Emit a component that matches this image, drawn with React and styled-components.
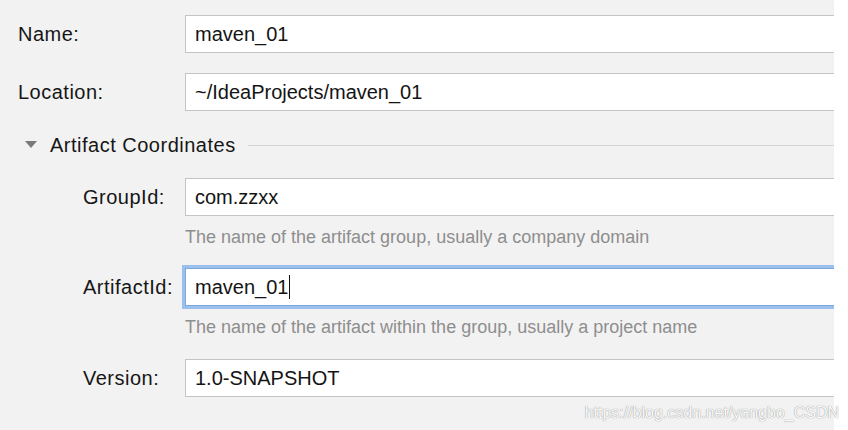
import React from "react";
import styled, { createGlobalStyle } from "styled-components";

const GlobalStyle = createGlobalStyle`
  html, body {
    margin: 0;
    padding: 0;
    background: #ffffff;
  }
  body {
    font-family: "Liberation Sans", Arial, Helvetica, sans-serif;
  }
`;

const Page = styled.div`
  position: relative;
  width: 848px;
  height: 430px;
  overflow: hidden;
`;

const Panel = styled.div`
  width: 834px;
  height: 430px;
  background: #f2f2f2;
  overflow: hidden;
  box-sizing: border-box;
  padding: 15px 0 0 18px;
  display: flex;
  flex-direction: column;
`;

const Row = styled.div`
  display: flex;
  align-items: center;
  height: 38px;
  margin-bottom: ${(p) => p.$gap || 0}px;
`;

const Label = styled.div`
  width: ${(p) => p.$width}px;
  flex: none;
  font-size: 20px;
  letter-spacing: 0.5px;
  color: #161616;
`;

const Field = styled.div`
  flex: 1;
  height: 38px;
  margin-right: -12px;
  box-sizing: border-box;
  background: #ffffff;
  border: 1px solid ${(p) => (p.$focused ? "#7fa8de" : "#c4c4c4")};
  box-shadow: ${(p) => (p.$focused ? "0 0 0 3px #9cc0ee" : "none")};
  display: flex;
  align-items: center;
  padding-left: 9px;
  font-size: 20px;
  color: #141414;
  white-space: nowrap;
`;

const Caret = styled.span`
  display: inline-block;
  width: 1px;
  height: 24px;
  background: #111;
  margin-left: 1px;
`;

const Section = styled.div`
  display: flex;
  align-items: center;
  height: 24px;
  margin: 22px 0 21px 7px;
`;

const Triangle = styled.svg`
  width: 12px;
  height: 8px;
  flex: none;
  margin-right: 13px;
`;

const SectionTitle = styled.div`
  font-size: 20px;
  letter-spacing: 0.5px;
  color: #161616;
  white-space: nowrap;
`;

const Rule = styled.div`
  flex: 1;
  height: 1px;
  background: #d6d6d6;
  margin-left: 12px;
`;

const SubForm = styled.div`
  padding-left: 65px;
  display: flex;
  flex-direction: column;
`;

const Hint = styled.div`
  height: 22px;
  line-height: 22px;
  margin: 10px 0 ${(p) => p.$after}px 102px;
  font-size: 18px;
  color: #8e8e8e;
  white-space: nowrap;
`;

const Watermark = styled.div`
  position: absolute;
  right: 9px;
  bottom: 8px;
  font-size: 16px;
  color: rgba(255, 255, 255, 0.95);
  text-shadow: 0 0 1px #9a9a9a, 0 0 1px #b0b0b0;
  white-space: nowrap;
`;

export default function App() {
  return (
    <Page>
      <GlobalStyle />
      <Panel>
        <Row $gap={20}>
          <Label $width={167}>Name:</Label>
          <Field>maven_01</Field>
        </Row>
        <Row>
          <Label $width={167}>Location:</Label>
          <Field>~/IdeaProjects/maven_01</Field>
        </Row>
        <Section>
          <Triangle viewBox="0 0 12 8">
            <path d="M0 0 L12 0 L6 7 Z" fill="#7a7a7a" />
          </Triangle>
          <SectionTitle>Artifact Coordinates</SectionTitle>
          <Rule />
        </Section>
        <SubForm>
          <Row>
            <Label $width={102}>GroupId:</Label>
            <Field>com.zzxx</Field>
          </Row>
          <Hint $after={20}>The name of the artifact group, usually a company domain</Hint>
          <Row>
            <Label $width={102}>ArtifactId:</Label>
            <Field $focused>
              maven_01
              <Caret />
            </Field>
          </Row>
          <Hint $after={21}>The name of the artifact within the group, usually a project name</Hint>
          <Row>
            <Label $width={102}>Version:</Label>
            <Field>1.0-SNAPSHOT</Field>
          </Row>
        </SubForm>
      </Panel>
      <Watermark>https://blog.csdn.net/yangbo_CSDN</Watermark>
    </Page>
  );
}
